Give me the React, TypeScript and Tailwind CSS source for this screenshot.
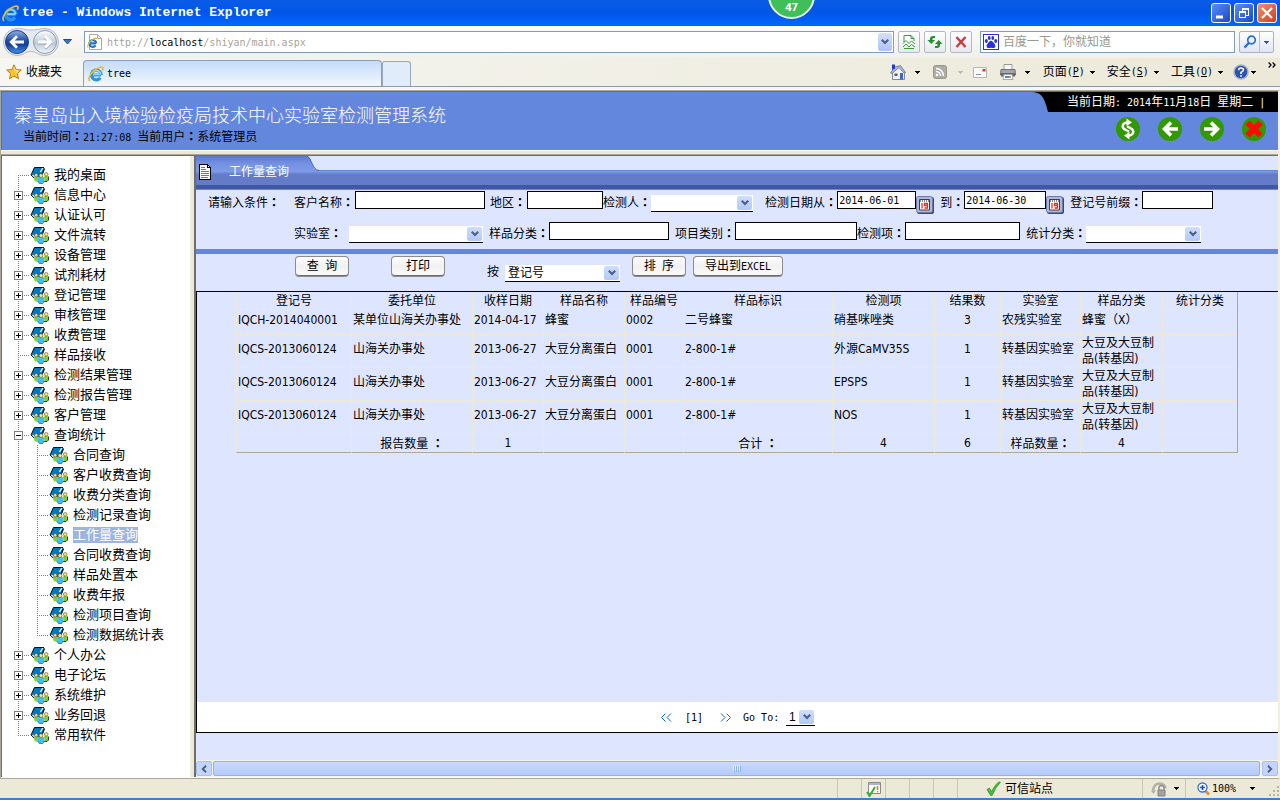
import { useState } from "react";
import type { ReactNode } from "react";

const treeData = [
  { name: "我的桌面", leaf: true },
  { name: "信息中心" },
  { name: "认证认可" },
  { name: "文件流转" },
  { name: "设备管理" },
  { name: "试剂耗材" },
  { name: "登记管理" },
  { name: "审核管理" },
  { name: "收费管理" },
  { name: "样品接收", leaf: true },
  { name: "检测结果管理" },
  { name: "检测报告管理" },
  { name: "客户管理" },
  {
    name: "查询统计",
    children: [
      "合同查询",
      "客户收费查询",
      "收费分类查询",
      "检测记录查询",
      "工作量查询",
      "合同收费查询",
      "样品处置本",
      "收费年报",
      "检测项目查询",
      "检测数据统计表",
    ],
  },
  { name: "个人办公" },
  { name: "电子论坛" },
  { name: "系统维护" },
  { name: "业务回退" },
  { name: "常用软件", leaf: true },
];

const columns = [
  { title: "登记号", width: "w-[115px]" },
  { title: "委托单位", width: "w-[121px]" },
  { title: "收样日期", width: "w-[71px]" },
  { title: "样品名称", width: "w-[81px]" },
  { title: "样品编号", width: "w-[59px]" },
  { title: "样品标识", width: "w-[149px]" },
  { title: "检测项", width: "w-[102px]" },
  { title: "结果数", width: "w-[66px]" },
  { title: "实验室", width: "w-[80px]" },
  { title: "样品分类", width: "w-[82px]" },
  { title: "统计分类", width: "w-[75px]" },
];

const rows = [
  ["IQCH-2014040001", "某单位山海关办事处", "2014-04-17", "蜂蜜", "0002", "二号蜂蜜", "硝基咪唑类", "3", "农残实验室", "蜂蜜（X）", ""],
  ["IQCS-2013060124", "山海关办事处", "2013-06-27", "大豆分离蛋白", "0001", "2-800-1#", "外源CaMV35S", "1", "转基因实验室", "大豆及大豆制品(转基因)", ""],
  ["IQCS-2013060124", "山海关办事处", "2013-06-27", "大豆分离蛋白", "0001", "2-800-1#", "EPSPS", "1", "转基因实验室", "大豆及大豆制品(转基因)", ""],
  ["IQCS-2013060124", "山海关办事处", "2013-06-27", "大豆分离蛋白", "0001", "2-800-1#", "NOS", "1", "转基因实验室", "大豆及大豆制品(转基因)", ""],
];

const totals = ["", "报告数量 ：", "1", "", "", "合计 ：", "4", "6", "样品数量：", "4", ""];

// Latin text at half the width of a Chinese character
function Half({ children, className = "" }: { children: ReactNode; className?: string }) {
  return <span className={`font-['DejaVu_Sans_Mono'] text-[10px] ${className}`}>{children}</span>;
}

// Full-width punctuation centred in its cell
function WithColon({ text }: { text: string }) {
  const [head, ...rest] = text.split("：");
  return (
    <>
      {head}
      {rest.length > 0 && <span className="font-['Noto_Sans_CJK_TC'] font-bold">：</span>}
    </>
  );
}

function Caret({ className = "text-black" }: { className?: string }) {
  return (
    <svg className={`shrink-0 ${className}`} width="5" height="3" viewBox="0 0 5 3" shapeRendering="crispEdges">
      <path d="M0 0h5v1H4v1H3v1H2V2H1V1H0z" fill="currentColor" />
    </svg>
  );
}

/* ---------- icons ---------- */

function IeLogo({ size = 16 }: { size?: number }) {
  return (
    <svg className="shrink-0" width={size} height={size} viewBox="0 0 16 16" fill="none">
      <path d="M13 9H4.500M13.200 9A4.900 4.900 0 1 0 12.300 11.800" stroke="#2b93e0" strokeWidth="3.200" />
      <path d="M12.500 8.600H5M12.800 8.400A4.700 4.700 0 0 0 4 7" stroke="#8fd8fb" strokeWidth="1.500" />
      <path d="M1.800 15C-.4 13 2.200 7.800 6 4.600 9.800 1.500 14 .2 14.900 1.600c.5.900.1 1.900-.5 3" stroke="#f3b92a" strokeWidth="1.600" />
    </svg>
  );
}

function PageLogo() {
  return (
    <svg className="shrink-0" width="16" height="16" viewBox="0 0 16 16" fill="none">
      <path d="M2.500.5h8l4 4v11h-12z" fill="#fff" stroke="#a9a9a9" />
      <path d="M10.500.5v4h4" stroke="#a9a9a9" />
      <path d="M9 9.300H3.500M9.200 9.300A3.400 3.400 0 1 0 8.600 11.400" stroke="#1c74cc" strokeWidth="2.200" />
      <path d="M1.200 13.500C-.2 12 2.200 8 5 6c2.400-1.700 5-2.300 5.200-.8" stroke="#eeb02a" strokeWidth="1.200" />
    </svg>
  );
}

function NavButtons() {
  return (
    <svg className="shrink-0" width="58" height="30" viewBox="0 0 58 30" fill="none">
      <defs>
        <linearGradient id="back" x1="0" y1="0" x2="0" y2="1">
          <stop offset="0" stopColor="#8fb0e4" />
          <stop offset=".4" stopColor="#2a56ae" />
          <stop offset=".6" stopColor="#143c94" />
          <stop offset="1" stopColor="#3f97ee" />
        </linearGradient>
        <linearGradient id="fwd" x1="0" y1="0" x2="0" y2="1">
          <stop offset="0" stopColor="#fdfdfe" />
          <stop offset=".55" stopColor="#bccadb" />
          <stop offset="1" stopColor="#f2f6fb" />
        </linearGradient>
      </defs>
      <path d="M15 1.500C22 1.500 22 3 29 3s8-1.500 14-1.500a13.500 13.500 0 0 1 0 27c-7 0-8-4-14-4s-7 4-14 4a13.500 13.500 0 0 1 0-27z" fill="#e6e9ed" stroke="#b4bbc4" />
      <circle cx="15" cy="15" r="11.500" fill="url(#back)" stroke="#1a3f86" />
      <path d="M22 15H9.500M15 9.200 9.200 15l5.800 5.800" stroke="#fff" strokeWidth="2.800" />
      <circle cx="43" cy="15" r="11.500" fill="url(#fwd)" stroke="#8d99a8" />
      <path d="M36 16h12.500M43 10.200 48.800 16 43 21.800" stroke="#93a1b3" strokeWidth="2.800" />
      <path d="M36 15h12.500M43 9.200 48.800 15 43 20.800" stroke="#fff" strokeWidth="2.800" />
    </svg>
  );
}

function Star() {
  return (
    <svg className="shrink-0" width="16" height="16" viewBox="0 0 16 16">
      <path d="M8 .8l2.100 4.700 5.200.5-3.900 3.500 1.200 5.300L8 12l-4.600 2.800 1.200-5.300L.7 6l5.200-.5z" fill="#fcc331" stroke="#c67c0e" strokeLinejoin="round" />
      <path d="M8 3l1.200 3.500 3 .3-2.400 2" fill="none" stroke="#ffe9a0" />
    </svg>
  );
}

function CompatIcon() {
  return (
    <svg width="14" height="14" viewBox="0 0 14 14" fill="none">
      <path d="M2 7V.5h7L12 3.500V6" fill="#fff" stroke="#3a9a3a" />
      <path d="M9 .5v3h3" stroke="#3a9a3a" />
      <path d="M1 8.500 4 5.500l3 3 2.500-2.500L13 9M1 12l3-3 3 3 2.500-2.500L13 12" stroke="#3a9a3a" />
      <path d="M2 13.500h10" stroke="#3a9a3a" />
    </svg>
  );
}

function RefreshIcon() {
  return (
    <svg width="16" height="14" viewBox="0 0 16 14" fill="#27902c">
      <path d="M8 1H6Q3 1 3 4v1H.5L4.200 9 8 5H5.500V4q0-1 .8-1H8z" />
      <path d="M8 13h2q3 0 3-3V9h2.500L11.800 5 8 9h2.500v1q0 1-.8 1H8z" />
    </svg>
  );
}

function StopIcon() {
  return (
    <svg width="12" height="12" viewBox="0 0 12 12" fill="none">
      <path d="M1.500 1 10.500 11M10.500 1 1.500 11" stroke="#c83c3c" strokeWidth="2.400" />
    </svg>
  );
}

function PawIcon() {
  return (
    <svg className="shrink-0" width="16" height="16" viewBox="0 0 16 16">
      <path d="M0 0h16v16H0z" fill="#2a32dd" />
      <path d="M1 1h14v14H1z" fill="#fff" />
      <g fill="#2a32dd">
        <ellipse cx="3.300" cy="7" rx="1.500" ry="2" />
        <ellipse cx="6.200" cy="3.900" rx="1.400" ry="2" />
        <ellipse cx="9.800" cy="3.900" rx="1.400" ry="2" />
        <ellipse cx="12.700" cy="7" rx="1.500" ry="2" />
        <path d="M8 6.800c1.600 0 2 1.500 3.300 2.700 1.800 1.700 1.300 4.500-.8 4.500-1 0-1.500-.3-2.500-.3s-1.500.3-2.500.3c-2.100 0-2.600-2.800-.8-4.500C6 8.300 6.400 6.800 8 6.800z" />
      </g>
    </svg>
  );
}

function SearchIcon() {
  return (
    <svg width="14" height="14" viewBox="0 0 14 14" fill="none">
      <circle cx="8.500" cy="5" r="3.800" fill="#eaf4ff" stroke="#2a6bd6" strokeWidth="1.700" />
      <path d="M5.800 8 1.500 12.500" stroke="#2a6bd6" strokeWidth="2.400" />
    </svg>
  );
}

function HomeIcon() {
  return (
    <svg width="16" height="16" viewBox="0 0 16 16">
      <path d="M2.500 8v7.500h12V8L9 2.500z" fill="#eef1f8" stroke="#7e89a6" />
      <path d="M.5 9 4.500 3l6-1.500 5 7-1.500.5-5-5.500L2 9.500z" fill="#a9b7d4" stroke="#6a7896" strokeWidth=".8" />
      <path d="M2 .5h3v4L2 6z" fill="#2239c8" />
      <path d="M10 9h3v6.500h-3z" fill="#3d68c6" />
      <path d="M4.500 9.500h3V12h-3z" fill="#7a5236" />
    </svg>
  );
}

function RssIcon() {
  return (
    <svg width="14" height="14" viewBox="0 0 14 14" fill="none">
      <rect x=".5" y=".5" width="13" height="13" rx="2" fill="#aeada4" stroke="#97968d" />
      <circle cx="4" cy="10" r="1.300" fill="#fff" />
      <path d="M3 6.500A4.500 4.500 0 0 1 7.500 11M3 3.500A7.500 7.500 0 0 1 10.500 11" stroke="#fff" strokeWidth="1.400" />
    </svg>
  );
}

function MailIcon() {
  return (
    <svg width="14" height="11" viewBox="0 0 14 11" fill="none">
      <path d="M.5.5h13v10H.5z" fill="#fbfafa" stroke="#b9b4ad" />
      <path d="M9.500 2h3v2.500h-3z" fill="#e03434" />
      <path d="M3 7.500h5" stroke="#8c8c9c" />
    </svg>
  );
}

function PrinterIcon() {
  return (
    <svg width="16" height="16" viewBox="0 0 16 16">
      <path d="M4 .5h8V6H4z" fill="#fff" stroke="#999" />
      <path d="M1 5.500h14l.5 5.500H.5z" fill="#a5a6aa" stroke="#6f7075" />
      <path d="M1 9h14v3.500H1z" fill="#66676c" />
      <path d="M4 10.500h8l1 5H3z" fill="#fff" stroke="#aaa" />
      <path d="M5 12h6v2H5z" fill="#3f8fd8" />
      <path d="M9 12h2v2H9z" fill="#d59a39" />
    </svg>
  );
}

function HelpIcon() {
  return (
    <svg width="16" height="16" viewBox="0 0 16 16" fill="none">
      <circle cx="8" cy="8" r="7" fill="#2c53b0" stroke="#a9b4c9" strokeWidth="1.500" />
      <path d="M5.600 6.200Q5.600 4 8 4t2.400 2Q10.400 7.200 8 8.400V10" stroke="#fff" strokeWidth="1.600" />
      <path d="M7.200 11.200h1.700v1.600H7.200z" fill="#fff" />
    </svg>
  );
}

function FolderIcon() {
  return (
    <svg className="shrink-0" width="19" height="17" viewBox="0 0 19 17">
      <path d="M4 .5h10l.5 2L12 9l-7 2.500-4-3z" fill="#0878bd" />
      <path d="M14 .5H4.500L1 8" fill="none" stroke="#06121f" />
      <path d="M1 8l3.500 3.500" stroke="#06121f" />
      <path d="M2.500 8 5 10.500" stroke="#d8effc" strokeWidth="1.200" />
      <path d="M12.800 1 10.500 5" stroke="#eef8ff" strokeWidth="1.400" />
      <path d="M14.500 1.500 12.500 6.500" stroke="#06121f" strokeWidth="1.200" />
      <path d="M4 10q2-1.500 4.500 0v4.500H5L4 12z" fill="#86d12f" />
      <path d="M14 9.500q2.500-1.500 4.500.5l-.5 4h-3.500z" fill="#7fce35" />
      <path d="M18.500 9.500v3.500L17 14.500h-3" fill="none" stroke="#12300b" strokeWidth=".9" />
      <path d="M7.800 10.500q3.400-1.500 6.400 0v4L12.500 17h-3l-1.700-2.500z" fill="#43bdf3" />
      <path d="M7.800 14 9.500 16.600h3L14.200 14" fill="none" stroke="#1573aa" strokeWidth=".7" />
      <circle cx="6.200" cy="8.300" r="1.700" fill="#fbe07a" stroke="#4c3608" strokeWidth=".5" />
      <circle cx="11" cy="8.600" r="1.900" fill="#fde88c" stroke="#4c3608" strokeWidth=".5" />
      <circle cx="16.200" cy="7.300" r="1.800" fill="#fbe07a" stroke="#4c3608" strokeWidth=".5" />
    </svg>
  );
}

function DocIcon() {
  return (
    <svg width="12" height="16" viewBox="0 0 12 16" fill="none" shapeRendering="crispEdges">
      <path d="M.5.5h8l3 3v12H.5z" fill="#fff" stroke="#000" />
      <path d="M8.500.5v3h3" stroke="#000" />
      <path d="M2 3.500h4M2 5.500h5M2 7.500h8M2 9.500h8M2 11.500h8M2 13.500h7" stroke="#777" />
    </svg>
  );
}

function CalendarIcon() {
  return (
    <svg width="18" height="18" viewBox="0 0 18 18">
      <rect x="1" y="1" width="17" height="17" rx="2" fill="#3f4a68" />
      <rect x=".5" y=".5" width="16" height="16" rx="2" fill="#a9b8de" stroke="#6d7ba6" />
      <path d="M3.500 3.500h10v10.500h-10z" fill="#fff" stroke="#4a3c3c" />
      <path d="M4 5h9" stroke="#8a8a8a" strokeWidth="2" strokeDasharray="1 1" />
      <path d="M6 7v5.500M11.500 9.500h-3v-2h3v4.500h-3" stroke="#e0301e" strokeWidth="1.300" fill="none" />
    </svg>
  );
}

function ArrowCircle({ kind }: { kind: "sync" | "left" | "right" | "close" }) {
  return (
    <svg width="24" height="24" viewBox="0 0 24 24" fill="none">
      <circle cx="12" cy="12" r="12" fill="#339900" />
      {kind === "sync" && (
        <g>
          <path d="M12 5.500q-3-.2-4.500 1.500-1.800 2.500.3 4.700l5.200 3" stroke="#fff" strokeWidth="2.400" />
          <path d="M10.500 1.500v7.500l5.500-3.500z" fill="#fff" />
          <path d="M12 18.500q3 .2 4.500-1.500 1.800-2.500-.3-4.700l-5.200-3" stroke="#fff" strokeWidth="2.400" />
          <path d="M13.500 22.500v-7.500L8 18.500z" fill="#fff" />
        </g>
      )}
      {kind === "left" && <path d="M20 12H7M13 5.500 6.500 12l6.500 6.500" stroke="#fff" strokeWidth="3.600" />}
      {kind === "right" && <path d="M4 12h13M11 5.500l6.500 6.500-6.500 6.500" stroke="#fff" strokeWidth="3.600" />}
      {kind === "close" && <path d="M5.500 5.500l13 13M18.500 5.500l-13 13" stroke="#ff0a00" strokeWidth="6" />}
    </svg>
  );
}

/* ---------- browser chrome ---------- */

function TitleBar() {
  return (
    <header className="relative flex h-[26px] items-center bg-linear-to-b from-[#0a5be6] via-[#0256e8] to-[#0068ff] pr-[3px] pl-[2px]">
      <IeLogo size={17} />
      <h1 className="ml-[3px] grow font-['Liberation_Mono'] text-[13px] font-bold text-white">
        tree - Windows Internet Explorer
      </h1>
      <div className="flex gap-[3px]">
        <button aria-label="最小化" className="flex size-5 items-center justify-center rounded-[3px] border border-white bg-linear-to-br from-[#5c8cf4] to-[#1c48c8]">
          <svg width="12" height="12" viewBox="0 0 12 12"><path d="M1 8.500h7v3H1z" fill="#fff" /></svg>
        </button>
        <button aria-label="还原" className="flex size-5 items-center justify-center rounded-[3px] border border-white bg-linear-to-br from-[#5c8cf4] to-[#1c48c8]">
          <svg width="12" height="12" viewBox="0 0 12 12" fill="none" stroke="#fff" shapeRendering="crispEdges">
            <path d="M4 1.500h6.500V8H8M4 1v3M4 2.500h7M1.500 4.500h6v6h-6zM1.500 5.500h6" />
          </svg>
        </button>
        <button aria-label="关闭" className="flex size-5 items-center justify-center rounded-[3px] border border-white bg-linear-to-br from-[#f0906c] to-[#cc3c12]">
          <svg width="12" height="12" viewBox="0 0 12 12"><path d="M1 1l10 10M11 1 1 11" stroke="#fff" strokeWidth="2.200" /></svg>
        </button>
      </div>
      <div className="absolute top-0 left-[768px] flex h-[19px] w-[47px] justify-center">
        <svg className="absolute top-0 left-0" width="47" height="21" viewBox="0 0 47 21">
          <circle cx="23.500" cy="-4.500" r="22.500" fill="#3fbf57" stroke="#e8f4ea" strokeWidth="2" />
        </svg>
        <span className="relative pt-px font-['Open_Sans'] text-[11px] leading-3 font-bold text-white">47</span>
      </div>
    </header>
  );
}

function AddressBar() {
  return (
    <div className="flex h-8 items-center bg-linear-to-b from-[#fbfbfa] to-[#f1f0ea] pr-[6px] pl-[2px]">
      <NavButtons />
      <button aria-label="最近的页面" className="ml-[3px]">
        <svg width="9" height="6" viewBox="0 0 9 6"><path d="M.5.5h8L4.500 5z" fill="#3a78b8" stroke="#1f4f86" /></svg>
      </button>
      <div className="ml-[12px] flex h-[22px] grow items-center border border-[#7f9db9] bg-white pl-[2px]">
        <PageLogo />
        <Half className="ml-[4px] grow text-[#a5a498]">
          http://<span className="text-black">localhost</span>/shiyan/main.aspx
        </Half>
        <button aria-label="地址列表" className="mr-px flex h-[18px] w-[14px] items-center justify-center rounded-[2px] bg-linear-to-b from-[#d4e0fb] to-[#adc3f4]">
          <SelectArrow />
        </button>
      </div>
      <div className="ml-1 flex gap-1">
        <ToolButton label="兼容性视图"><CompatIcon /></ToolButton>
        <ToolButton label="刷新"><RefreshIcon /></ToolButton>
        <ToolButton label="停止"><StopIcon /></ToolButton>
      </div>
      <div className="ml-2 flex h-[22px] w-[255px] items-center border border-[#7f9db9] bg-white pl-[2px]">
        <PawIcon />
        <input
          aria-label="搜索"
          placeholder="百度一下，你就知道"
          className="ml-1 w-full min-w-0 text-xs text-black outline-none placeholder:text-[#9a998c]"
        />
      </div>
      <div className="ml-1 flex h-[22px] rounded-[2px] border border-[#a9b3c4] bg-linear-to-b from-white to-[#dfe5f3]">
        <button aria-label="开始搜索" className="flex w-[20px] items-center justify-center border-r border-[#b9c2d2]"><SearchIcon /></button>
        <button aria-label="搜索选项" className="flex w-[13px] items-center justify-center"><Caret className="text-[#2357b5]" /></button>
      </div>
    </div>
  );
}

function ToolButton({ label, children }: { label: string; children: ReactNode }) {
  return (
    <button aria-label={label} className="flex size-[22px] items-center justify-center rounded-[2px] border border-[#b5bac2] bg-linear-to-b from-white to-[#e6e9ef]">
      {children}
    </button>
  );
}

function TabRow() {
  return (
    <div className="flex h-[29px] items-stretch border-b border-[#8d99a9] bg-linear-to-r from-[#f6f6f3] to-[#ece9d8] pr-1 pl-[6px]">
      <button className="flex w-[77px] items-center gap-[4px] text-xs">
        <Star />
        收藏夹
      </button>
      <button className="mt-[2px] flex w-[299px] items-center rounded-t-[4px] border border-b-0 border-[#8e9fb8] bg-linear-to-b from-[#c3dbfa] to-[#f4f8fd] pl-[4px]">
        <IeLogo />
        <Half className="ml-[3px]">tree</Half>
      </button>
      <button aria-label="新选项卡" className="mt-[3px] w-[29px] rounded-t-[3px] border border-b-0 border-[#9aa7b8] bg-[#e1ecfa]" />
      <div className="flex grow items-center justify-end text-xs">
        <button aria-label="主页"><HomeIcon /></button>
        <Caret className="ml-[9px] text-black" />
        <button aria-label="源" className="ml-[13px]"><RssIcon /></button>
        <Caret className="ml-[11px] text-[#bdbcb2]" />
        <button aria-label="邮件" className="ml-[10px]"><MailIcon /></button>
        <button aria-label="打印" className="ml-[13px]"><PrinterIcon /></button>
        <Caret className="ml-[9px] text-black" />
        <button className="ml-[13px] flex items-center">页面<Half>(<u>P</u>)</Half><Caret className="ml-[5px] text-black" /></button>
        <button className="ml-[12px] flex items-center">安全<Half>(<u>S</u>)</Half><Caret className="ml-[5px] text-black" /></button>
        <button className="ml-[12px] flex items-center">工具<Half>(<u>O</u>)</Half><Caret className="ml-[5px] text-black" /></button>
        <button aria-label="帮助" className="ml-[10px]"><HelpIcon /></button>
        <Caret className="ml-[2px] text-black" />
        <button aria-label="更多" className="ml-[12px] self-start pt-[4px]">
          <svg width="8" height="6" viewBox="0 0 8 6" fill="none" stroke="#000" strokeWidth="1.300"><path d="M.7.5 3 3 .7 5.500M4.700.5 7 3 4.700 5.500" /></svg>
        </button>
      </div>
    </div>
  );
}

/* ---------- page ---------- */

function Banner() {
  return (
    <div className="flex h-[58px] justify-between bg-[#6487de]">
      <div className="pt-3 pl-[12px]">
        <h2 className="text-lg leading-6 font-light text-white">秦皇岛出入境检验检疫局技术中心实验室检测管理系统</h2>
        <p className="pl-[9px] text-xs leading-4">
          <WithColon text="当前时间：" /><Half>21:27:08 </Half><WithColon text="当前用户：" />系统管理员
        </p>
      </div>
      <div className="flex flex-col items-end">
        <div className="flex h-5">
          <svg width="17" height="20" viewBox="0 0 17 20"><path d="M0 0c10 1 12 8 15 20h2V0z" fill="#000" /></svg>
          <p className="w-[228px] bg-black pl-[17px] text-xs leading-5 text-white">
            当前日期<Half>: 2014</Half>年<Half>11</Half>月<Half>18</Half>日<Half> </Half>星期二<Half> |</Half>
          </p>
        </div>
        <div className="mt-[5px] flex gap-[18px] pr-[12px]">
          <button aria-label="刷新页面"><ArrowCircle kind="sync" /></button>
          <button aria-label="后退"><ArrowCircle kind="left" /></button>
          <button aria-label="前进"><ArrowCircle kind="right" /></button>
          <button aria-label="退出系统"><ArrowCircle kind="close" /></button>
        </div>
      </div>
    </div>
  );
}

// Dotted connector lines in front of a tree node, with the +/- box when it can be expanded
function Gutter({ up, down, box }: { up: boolean; down: boolean; box?: "plus" | "minus" }) {
  return (
    <svg className="block" width="16" height="20" viewBox="0 0 16 20" fill="none" shapeRendering="crispEdges">
      {up && <path d="M4.500 0v10" stroke="#808080" strokeDasharray="1 1" />}
      {down && <path d="M4.500 10v10" stroke="#808080" strokeDasharray="1 1" />}
      <path d="M4 10.500h12" stroke="#808080" strokeDasharray="1 1" />
      {box && <path d="M.5 6.500h8v8h-8z" fill="#fff" stroke="#808080" />}
      {box && <path d="M2 10.500h5" stroke="#000" />}
      {box === "plus" && <path d="M4.500 8v5" stroke="#000" />}
    </svg>
  );
}

function Tree() {
  const [open, setOpen] = useState<string[]>(["查询统计"]);
  const [selected, setSelected] = useState("工作量查询");

  const toggle = (name: string) =>
    setOpen(open.includes(name) ? open.filter((n) => n !== name) : [...open, name]);

  const label = (name: string) => (
    <a
      href="#"
      onClick={() => setSelected(name)}
      className={selected === name ? "ml-[5px] bg-[#9bb5e0] leading-4 text-white" : "ml-[5px] leading-4"}
    >
      {name}
    </a>
  );

  return (
    <nav className="w-[188px] shrink-0 bg-white pt-[9px] pl-3 text-[13px]">
      <ul>
        {treeData.map((node, i) => {
          const isOpen = open.includes(node.name);
          const last = i === treeData.length - 1;
          return (
            <li key={node.name}>
              <div className="flex h-5 items-center">
                {node.leaf ? (
                  <Gutter up={i > 0} down={!last} />
                ) : (
                  <button aria-label={`展开 ${node.name}`} onClick={() => toggle(node.name)}>
                    <Gutter up={i > 0} down={!last} box={isOpen ? "minus" : "plus"} />
                  </button>
                )}
                <FolderIcon />
                {label(node.name)}
              </div>
              {node.children && isOpen && (
                <ul>
                  {node.children.map((child, j) => (
                    <li key={child} className="flex h-5 items-center">
                      <svg width="19" height="20" viewBox="0 0 19 20" shapeRendering="crispEdges">
                        <path d="M4.500 0v20" stroke="#808080" strokeDasharray="1 1" />
                      </svg>
                      <Gutter up down={j < node.children.length - 1} />
                      <FolderIcon />
                      {label(child)}
                    </li>
                  ))}
                </ul>
              )}
            </li>
          );
        })}
      </ul>
    </nav>
  );
}

function SelectArrow() {
  return (
    <svg width="8" height="6" viewBox="0 0 8 6" fill="none">
      <path d="M.8.8 4 4 7.200.8" stroke="#4d6185" strokeWidth="2.200" />
    </svg>
  );
}

function XpSelect({ id, width, options = [""] }: { id: string; width: string; options?: string[] }) {
  return (
    <span className={`relative h-[17px] shrink-0 border-b border-black bg-white ${width}`}>
      <select id={id} className="block h-4 w-full appearance-none bg-transparent pr-4 pl-[3px] text-xs leading-4 outline-none">
        {options.map((o) => (
          <option key={o}>{o}</option>
        ))}
      </select>
      <span className="pointer-events-none absolute top-px right-px flex h-[14px] w-[15px] items-center justify-center rounded-[2px] bg-linear-to-b from-[#d0defc] to-[#b2c8f8]">
        <SelectArrow />
      </span>
    </span>
  );
}

function Field({ id, label, className = "", children }: { id: string; label: string; className?: string; children: ReactNode }) {
  return (
    <div className={`flex shrink-0 ${className}`}>
      <label htmlFor={id} className="w-max pt-[3px] leading-4 whitespace-nowrap"><WithColon text={label} /></label>
      {children}
    </div>
  );
}

const box = "h-[18px] border border-black bg-white px-px font-['DejaVu_Sans_Mono'] text-[10px] outline-none";

function QueryForm() {
  return (
    <form className="h-[59px] pt-px pl-[12px] text-xs">
      <div className="flex h-[31px] items-start">
        <span className="w-[86px] shrink-0 pt-[3px] leading-4"><WithColon text="请输入条件：" /></span>
        <Field id="customer" label="客户名称："><input id="customer" className={`${box} ml-px w-[130px]`} /></Field>
        <Field id="area" label="地区：" className="ml-[5px]"><input id="area" className={`${box} ml-px w-[76px]`} /></Field>
        <Field id="tester" label="检测人："><span className="flex pt-[4px]"><XpSelect id="tester" width="w-[102px]" /></span></Field>
        <Field id="from" label="检测日期从：" className="ml-[12px]">
          <input id="from" defaultValue="2014-06-01" className={`${box} w-[79px]`} />
          <button type="button" aria-label="选择开始日期" className="pt-[5px]"><CalendarIcon /></button>
        </Field>
        <Field id="to" label="到：" className="ml-[6px]">
          <input id="to" defaultValue="2014-06-30" className={`${box} w-[82px]`} />
          <button type="button" aria-label="选择结束日期" className="pt-[5px]"><CalendarIcon /></button>
        </Field>
        <Field id="prefix" label="登记号前缀：" className="ml-[6px]"><input id="prefix" className={`${box} w-[71px]`} /></Field>
      </div>
      <div className="flex items-start pl-[86px]">
        <Field id="lab" label="实验室："><span className="flex pt-[4px] pl-[7px]"><XpSelect id="lab" width="w-[134px]" /></span></Field>
        <Field id="sampleType" label="样品分类：" className="ml-[6px]"><input id="sampleType" className={`${box} w-[120px]`} /></Field>
        <Field id="itemType" label="项目类别：" className="ml-[6px]"><input id="itemType" className={`${box} w-[122px]`} /></Field>
        <Field id="item" label="检测项："><input id="item" className={`${box} w-[115px]`} /></Field>
        <Field id="statType" label="统计分类：" className="ml-[6px]"><span className="flex pt-[4px]"><XpSelect id="statType" width="w-[115px]" /></span></Field>
      </div>
    </form>
  );
}

function ActionButton({ children, className }: { children: ReactNode; className: string }) {
  return (
    <button className={`h-5 rounded-[4px] border border-[#8c8c8c] border-b-[#6a6a6a] bg-linear-to-b from-white via-[#f1f1f1] to-[#fafafa] text-xs leading-4 whitespace-pre shadow-[0_1px_0_#8f8f8f] ${className}`}>
      {children}
    </button>
  );
}

function Actions() {
  return (
    <div className="flex h-[37px] items-start pt-[2px] pl-[99px] text-xs">
      <ActionButton className="w-[54px]">查  询</ActionButton>
      <ActionButton className="ml-[42px] w-[54px]">打印</ActionButton>
      <label htmlFor="sort" className="ml-[42px] pt-[8px] leading-4">按</label>
      <span className="ml-[6px] flex pt-[9px]"><XpSelect id="sort" width="w-[115px]" options={["登记号", "收样日期"]} /></span>
      <ActionButton className="ml-[12px] w-[54px]">排<Half> </Half>序</ActionButton>
      <ActionButton className="ml-[7px] w-[90px]">导出到<Half>EXCEL</Half></ActionButton>
    </div>
  );
}

function ResultTable() {
  return (
    <table className="w-[1001px] table-fixed border-separate border-spacing-0 border-r border-[#aca899] font-['DejaVu_Sans_Condensed','Noto_Sans','Noto_Sans_CJK_SC',sans-serif] text-xs leading-4">
      <thead>
        <tr className="h-[18px]">
          {columns.map((c) => (
            <th key={c.title} className={`border-b border-l border-[#ece9d8] p-0 font-normal ${c.width}`}>{c.title}</th>
          ))}
        </tr>
      </thead>
      <tbody>
        {rows.map((row, r) => (
          <tr key={r} className={r === 0 ? "h-[25px]" : "h-[33px]"}>
            {row.map((cell, i) => (
              <td
                key={i}
                className={`border-b border-l border-[#ece9d8] px-px pt-0 ${i === 9 && r > 0 ? "pb-0" : "pb-1"} ${i === 7 ? "text-center" : ""}`}
              >
                {cell}
              </td>
            ))}
          </tr>
        ))}
      </tbody>
      <tfoot>
        <tr className="h-[19px]">
          {totals.map((cell, i) => (
            <td key={i} className="border-b border-l border-[#ece9d8] border-b-[#aca899] p-0 text-center"><WithColon text={cell} /></td>
          ))}
        </tr>
      </tfoot>
    </table>
  );
}

function Pager() {
  return (
    <div className="flex h-[30px] items-center bg-white pl-[463px]">
      <a href="#" aria-label="上一页">
        <svg width="12" height="9" viewBox="0 0 12 9" fill="none" stroke="#0a6fd0"><path d="M5.500.5l-4 4 4 4M11 .5l-4 4 4 4" /></svg>
      </a>
      <Half className="ml-[13px]">[1]</Half>
      <a href="#" aria-label="下一页" className="ml-[17px]">
        <svg width="12" height="9" viewBox="0 0 12 9" fill="none" stroke="#0a6fd0"><path d="M1 .5l4 4-4 4M6.500.5l4 4-4 4" /></svg>
      </a>
      <label htmlFor="goto" className="ml-[11px] w-[43px] font-['DejaVu_Sans_Mono'] text-[10px]">Go To:</label>
      <XpSelect id="goto" width="w-[29px]" options={["1"]} />
    </div>
  );
}

function ScrollBar() {
  return (
    <div className="flex h-[17px] items-center bg-[#f3f2ec]">
      <button aria-label="向左滚动" className="flex h-[15px] w-[16px] items-center justify-center rounded-[2px] border border-[#a9c0f0] bg-[#c3d5fd]">
        <svg width="6" height="8" viewBox="0 0 6 8" fill="none"><path d="M5 .8 1.800 4 5 7.200" stroke="#4d6185" strokeWidth="2" /></svg>
      </button>
      <div className="mx-px flex h-[15px] grow items-center justify-center gap-px rounded-[2px] border border-[#98b0e6] bg-linear-to-b from-[#cbdafd] to-[#b4cafa]">
        <svg width="8" height="7" viewBox="0 0 8 7" shapeRendering="crispEdges">
          <path d="M.5 0v6M2.500 0v6M4.500 0v6M6.500 0v6" stroke="#eef4fe" />
          <path d="M1.500 1v6M3.500 1v6M5.500 1v6M7.500 1v6" stroke="#8cb0f8" />
        </svg>
      </div>
      <button aria-label="向右滚动" className="ml-px flex h-[15px] w-[16px] items-center justify-center rounded-[2px] border border-[#a9c0f0] bg-[#c3d5fd]">
        <svg width="6" height="8" viewBox="0 0 6 8" fill="none"><path d="M1 .8 4.200 4 1 7.200" stroke="#4d6185" strokeWidth="2" /></svg>
      </button>
    </div>
  );
}

function SectionTab() {
  return (
    <div className="relative flex h-[34px] items-start">
      <div className="absolute inset-x-0 top-[14px] bottom-0 border-t border-b border-[#6487de] bg-linear-to-b from-[#7f9ce6] via-[#647cc8] via-20% to-[#647cc8] to-70%">
        <div className="mt-[14px] h-[4px] bg-[#3f57a4]" />
      </div>
      <svg className="absolute top-0 left-0" width="124" height="16" viewBox="0 0 124 16">
        <defs>
          <linearGradient id="tab" x1="0" y1="0" x2="0" y2="1">
            <stop offset="0" stopColor="#5b78cc" />
            <stop offset=".5" stopColor="#7592e2" />
            <stop offset="1" stopColor="#7d9bea" />
          </linearGradient>
        </defs>
        <path d="M0 0h111c5 2 5 14 11 14l1 2H0z" fill="url(#tab)" />
        <path d="M111 0c5 2 5 14 12 14.500" fill="none" stroke="#3f62b8" />
      </svg>
      <div className="relative flex items-center pt-[8px] pl-[3px]">
        <DocIcon />
        <h3 className="ml-[18px] text-xs leading-4 text-white">工作量查询</h3>
      </div>
    </div>
  );
}

function StatusBar() {
  return (
    <footer className="flex h-[21px] items-center justify-end border-b-2 border-[#3a7fe0] bg-[#ece9d8] text-xs">
      <span className="h-full w-6 border-l border-[#c9c6b5]" />
      <span className="flex h-full w-6 items-center justify-center border-l border-[#c9c6b5]">
        <svg width="16" height="16" viewBox="0 0 16 16" fill="none">
          <path d="M2.500 1.500h12v11h-12z" fill="#fff" stroke="#8a8a8a" />
          <path d="M3 3h11" stroke="#a7b4cc" strokeWidth="2" />
          <path d="M11.500 5v4M11.500 10v1.500" stroke="#ee7d14" strokeWidth="1.600" />
          <path d="M1 11l2.500 4L9 6" stroke="#35b02e" strokeWidth="2" />
        </svg>
      </span>
      <span className="h-full w-6 border-l border-[#c9c6b5]" />
      <span className="h-full w-6 border-l border-[#c9c6b5]" />
      <span className="h-full w-6 border-l border-[#c9c6b5]" />
      <span className="flex h-full w-[185px] items-center gap-[4px] border-l border-[#c9c6b5] pl-[28px]">
        <svg width="15" height="15" viewBox="0 0 15 15"><path d="M1 8.500 3.500 7l2 3.500Q8.500 4 13 .8l1.500.5Q9.500 6.500 6.200 14.500H4.500z" fill="#4bb83a" stroke="#2f8f26" strokeWidth=".6" /></svg>
        可信站点
      </span>
      <button aria-label="保护模式" className="flex h-full w-[43px] items-center gap-[6px] border-l border-[#c9c6b5] pl-[8px]">
        <svg width="17" height="16" viewBox="0 0 17 16" fill="none">
          <path d="M2 11Q2 3 8.500 2.500q5 0 6 5" stroke="#b1b1ad" strokeWidth="2.500" />
          <path d="M0 9.500h5L2.500 13z" fill="#b1b1ad" />
          <path d="M8 9V7q0-2.500 2.500-2.500T13 7v2" stroke="#8f8f8f" strokeWidth="1.400" />
          <path d="M7 9h7v6H7z" fill="#a2a2a0" stroke="#858585" />
        </svg>
        <Caret />
      </button>
      <button className="flex h-full w-[95px] items-center border-l border-[#c9c6b5] pl-[11px]">
        <svg width="14" height="14" viewBox="0 0 14 14" fill="none">
          <path d="M8 8.500l4 4" stroke="#d8923c" strokeWidth="2.600" />
          <circle cx="5.500" cy="5.500" r="4.500" fill="#fff" stroke="#3f74cc" strokeWidth="1.400" />
          <path d="M3 5.500h5M5.500 3v5" stroke="#1e56c4" strokeWidth="1.700" />
        </svg>
        <Half className="ml-px">100%</Half>
        <Caret className="ml-[14px] text-black" />
        <svg className="mt-[6px] ml-auto" width="11" height="11" viewBox="0 0 11 11" fill="#b8b4a2"><path d="M8 0h2v2H8zM8 4h2v2H8zM4 4h2v2H4zM8 8h2v2H8zM4 8h2v2H4zM0 8h2v2H0z" /></svg>
      </button>
    </footer>
  );
}

export default function App() {
  return (
    <div className="flex min-h-screen flex-col overflow-hidden bg-[#ece9d8] font-['Liberation_Sans','Noto_Sans_CJK_SC',sans-serif] text-black">
      <TitleBar />
      <AddressBar />
      <TabRow />
      <div className="h-[3px] bg-[#f7f7f5]" />
      <div className="flex grow flex-col border-t border-r-2 border-b border-l border-t-[#aca899] border-r-[#f1efe2] border-b-[#aca899] border-l-[#aca899]">
        <div className="border-t border-l border-[#716f64]">
          <Banner />
        </div>
        <div className="h-[5px] border-t border-b border-t-white border-b-[#aca899] bg-[#ece9d8]" />
        <div className="flex grow border-b border-white">
          <div className="flex border-t border-l border-[#716f64]">
            <Tree />
            <div className="w-[4px] border-l border-[#f1efe2] bg-[#ece9d8]" />
          </div>
          <main className="flex min-w-0 grow flex-col overflow-hidden border-t border-l-2 border-[#716f64] bg-[#dee6ff]">
            <SectionTab />
            <QueryForm />
            <div className="h-[5px] bg-[#6487de]" />
            <Actions />
            <section className="flex grow flex-col border-t border-b border-l border-black">
              <div className="grow pl-[39px]"><ResultTable /></div>
              <Pager />
            </section>
            <div className="h-[27px]" />
            <ScrollBar />
          </main>
        </div>
      </div>
      <StatusBar />
    </div>
  );
}
